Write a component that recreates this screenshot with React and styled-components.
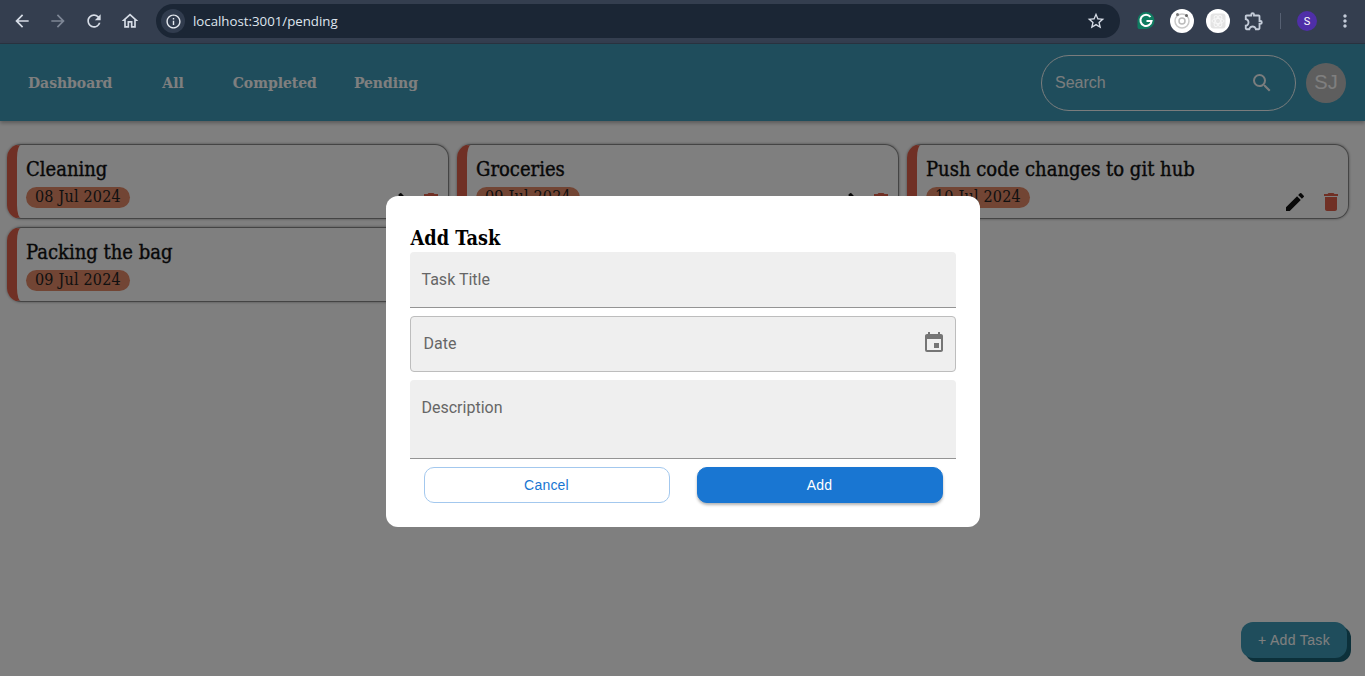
import React from 'react'
import styled, { createGlobalStyle } from 'styled-components'
import {
  MdArrowBack, MdArrowForward, MdRefresh, MdOutlineHome, MdInfoOutline, MdStarBorder,
  MdOutlineExtension, MdMoreVert, MdSearch, MdEdit, MdDelete, MdEvent,
} from 'react-icons/md'

const slab = '"DejaVu Serif Condensed", "DejaVu Serif", serif'
const arial = '"Liberation Sans", Arial, sans-serif'

const GlobalStyle = createGlobalStyle`
  html, body { margin: 0; padding: 0; height: 100%; overflow: hidden; background: #fff; }
  * { box-sizing: border-box; }
  #root { height: 100%; }
`

const Page = styled.div`
  position: relative;
  width: 1365px;
  height: 676px;
  overflow: hidden;
  font-family: Roboto, sans-serif;
`

const Toolbar = styled.div`
  height: 44px;
  background: #343e4f;
  border-bottom: 1px solid #2b3442;
  display: flex;
  align-items: center;
  padding: 0 0 1px 4px;
  color: #d6dce6;
`

const NavIcon = styled.span`
  width: 36px;
  height: 36px;
  display: flex;
  align-items: center;
  justify-content: center;
  font-size: 20px;
  color: ${p => (p.$off ? '#7d8695' : '#d6dce6')};
`

const UrlBar = styled.div`
  width: 964px;
  height: 34px;
  margin-left: 8px;
  padding: 0 6px 0 5px;
  border-radius: 17px;
  background: #1b2635;
  display: flex;
  align-items: center;
`

const InfoBubble = styled.span`
  width: 24px;
  height: 24px;
  border-radius: 50%;
  background: #313c4e;
  display: flex;
  align-items: center;
  justify-content: center;
  font-size: 17px;
  color: #e6eaf0;
`

const UrlText = styled.span`
  margin-left: 8px;
  flex: 1;
  font-family: "Open Sans", sans-serif;
  font-size: 13.25px;
  color: #dfe5ee;
`

const Extensions = styled.div`
  display: flex;
  align-items: center;
  margin-left: 8px;
`

const ExtSlot = styled.span`
  width: 36px;
  height: 36px;
  margin-left: ${p => p.$gap || 0}px;
  display: flex;
  align-items: center;
  justify-content: center;
  font-size: ${p => p.$size || 22}px;
  color: #c3cbd8;
`

const Divider = styled.span`
  width: 1px;
  height: 16px;
  background: #566072;
  margin: 0 16px 0 8px;
`

const Profile = styled.span`
  width: 20px;
  height: 20px;
  border-radius: 50%;
  background: #4f2fa8;
  color: #fff;
  font-size: 11px;
  display: flex;
  align-items: center;
  justify-content: center;
`

const Header = styled.header`
  height: 77px;
  background: #3e9bb8;
  box-shadow: 0 2px 4px rgba(0, 0, 0, 0.3);
  display: flex;
  align-items: center;
  padding: 0 19px 0 28px;
  color: #fff;
`

const NavLink = styled.a`
  font-family: ${slab};
  font-weight: 700;
  font-size: 15.5px;
  margin-left: ${p => p.$gap || 0}px;
`

const SearchBox = styled.div`
  margin-left: auto;
  width: 255px;
  height: 56px;
  border: 1px solid #fff;
  border-radius: 28px;
  padding: 0 21px 0 13px;
  display: flex;
  align-items: center;
  justify-content: space-between;
  font-family: ${arial};
  font-size: 16px;
  opacity: 0.95;
`

const Avatar = styled.div`
  margin-left: 10px;
  width: 40px;
  height: 40px;
  border-radius: 50%;
  background: #bdbdbd;
  display: flex;
  align-items: center;
  justify-content: center;
  font-family: ${arial};
  font-size: 20px;
`

const TaskGrid = styled.main`
  display: grid;
  grid-template-columns: repeat(3, 442px);
  gap: 8px;
  padding: 23px 0 0 7px;
`

const TaskCard = styled.article`
  height: 75px;
  border: 1px solid #888;
  border-left: 10px solid #e0604a;
  border-radius: 14px;
  box-shadow: 0 0 3px rgba(0, 0, 0, 0.4);
  padding: 11px 5px 0 9px;
  display: flex;
  justify-content: space-between;
`

const TaskText = styled.div`
  display: flex;
  flex-direction: column;
  align-items: flex-start;
`

const TaskTitle = styled.h3`
  margin: 0;
  font-family: ${slab};
  font-weight: 500;
  font-size: 20px;
  line-height: 27px;
  color: #111;
  -webkit-text-stroke: 0.4px #111;
`

const DateBadge = styled.span`
  margin-top: 4px;
  height: 21px;
  padding: 0 9px;
  border-radius: 11px;
  background: #e58a68;
  font-family: ${slab};
  font-size: 16px;
  letter-spacing: 0.2px;
  line-height: 19px;
  color: #222;
`

const Actions = styled.div`
  align-self: flex-end;
  display: flex;
  gap: 12px;
  font-size: 24px;
  margin-bottom: 4px;
`

const ActionIcon = styled.span`
  display: flex;
  color: ${p => (p.$danger ? '#e0604a' : '#111')};
`

const AddButton = styled.button`
  position: absolute;
  right: 18px;
  bottom: 18px;
  width: 106px;
  height: 36px;
  border: 0;
  border-radius: 12px;
  background: #3e9bb8;
  box-shadow: 4px 4px 0 #186074;
  color: #fff;
  font-family: ${arial};
  font-size: 14px;
  letter-spacing: 0.35px;
`

const Backdrop = styled.div`
  position: absolute;
  left: 0;
  right: 0;
  top: 44px;
  bottom: 0;
  background: rgba(0, 0, 0, 0.5);
  display: flex;
  align-items: center;
  justify-content: center;
  padding-top: 3px;
`

const Modal = styled.section`
  width: 594px;
  height: 331px;
  background: #fff;
  border-radius: 12px;
  padding: 29px 24px 0;
`

const ModalTitle = styled.h2`
  margin: 0;
  padding-left: 1px;
  font-family: ${slab};
  font-weight: 700;
  font-size: 19.7px;
  line-height: 27px;
  color: #000;
`

const Field = styled.div`
  height: ${p => p.$height || 56}px;
  margin-bottom: 8px;
  background: #efefef;
  border-radius: 4px 4px 0 0;
  border-bottom: 1px solid #949494;
  padding: 18px 12px 0;
  font-size: 16px;
  line-height: 20px;
  color: #666;
`

const OutlinedField = styled.div`
  height: 56px;
  margin-bottom: 8px;
  background: #efefef;
  border: 1px solid #bdbdbd;
  border-radius: 4px;
  padding: 0 9px 2px 13px;
  display: flex;
  align-items: center;
  justify-content: space-between;
  font-size: 16px;
  color: #666;

  svg {
    font-size: 24px;
    color: #757575;
  }
`

const ButtonRow = styled.div`
  display: flex;
  gap: 27px;
  padding: 0 13px 0 14px;
`

const DialogButton = styled.button`
  flex: 1;
  height: 36px;
  border-radius: 10px;
  font-family: ${arial};
  font-size: 14px;
  letter-spacing: 0.2px;
  border: 1px solid ${p => (p.$primary ? '#1976d2' : '#a3c8ee')};
  background: ${p => (p.$primary ? '#1976d2' : '#fff')};
  color: ${p => (p.$primary ? '#fff' : '#1976d2')};
  box-shadow: ${p => (p.$primary ? '0 2px 3px rgba(0,0,0,0.3)' : 'none')};
`

const tasks = [
  { title: 'Cleaning', date: '08 Jul 2024' },
  { title: 'Groceries', date: '09 Jul 2024' },
  { title: 'Push code changes to git hub', date: '10 Jul 2024' },
  { title: 'Packing the bag', date: '09 Jul 2024' },
]

function GrammarlyIcon() {
  return (
    <svg width="20" height="20" viewBox="0 0 20 20">
      <path d="M10 1a8.5 8.5 0 1 1 0 17H2.5l-1-1.5V9.5A8.5 8.5 0 0 1 10 1z" fill="#0f7c61" />
      <path d="M14.5 6A5.6 5.6 0 1 0 15.6 10H10.5" fill="none" stroke="#fff" strokeWidth="2" />
    </svg>
  )
}

function TimerIcon() {
  return (
    <svg width="24" height="24" viewBox="0 0 24 24">
      <circle cx="12" cy="12" r="12" fill="#fff" />
      <circle cx="12" cy="12" r="7" fill="none" stroke="#c9c9c9" strokeWidth="1.5" />
      <circle cx="12" cy="12" r="3" fill="none" stroke="#bbb" strokeWidth="1.5" />
      <circle cx="7.5" cy="5.5" r="1.5" fill="#777" />
      <circle cx="16.5" cy="6.5" r="1.5" fill="#666" />
    </svg>
  )
}

function ReactIcon() {
  return (
    <svg width="24" height="24" viewBox="0 0 24 24">
      <circle cx="12" cy="12" r="12" fill="#fff" />
      <rect x="4.5" y="4.5" width="15" height="15" rx="3" fill="#e4e4e4" />
      <g fill="none" stroke="#f7f7f7" strokeWidth="1">
        <ellipse cx="12" cy="12" rx="6" ry="2.5" />
        <ellipse cx="12" cy="12" rx="6" ry="2.5" transform="rotate(60 12 12)" />
        <ellipse cx="12" cy="12" rx="6" ry="2.5" transform="rotate(120 12 12)" />
      </g>
    </svg>
  )
}

export default function App() {
  return (
    <Page>
      <GlobalStyle />
      <Toolbar>
        <NavIcon><MdArrowBack /></NavIcon>
        <NavIcon $off><MdArrowForward /></NavIcon>
        <NavIcon><MdRefresh /></NavIcon>
        <NavIcon><MdOutlineHome /></NavIcon>
        <UrlBar>
          <InfoBubble><MdInfoOutline /></InfoBubble>
          <UrlText>localhost:3001/pending</UrlText>
          <NavIcon><MdStarBorder /></NavIcon>
        </UrlBar>
        <Extensions>
          <ExtSlot><GrammarlyIcon /></ExtSlot>
          <ExtSlot><TimerIcon /></ExtSlot>
          <ExtSlot><ReactIcon /></ExtSlot>
          <ExtSlot><MdOutlineExtension /></ExtSlot>
          <Divider />
          <Profile>S</Profile>
          <ExtSlot $gap={10} $size={20}><MdMoreVert /></ExtSlot>
        </Extensions>
      </Toolbar>

      <Header>
        <NavLink>Dashboard</NavLink>
        <NavLink $gap={50}>All</NavLink>
        <NavLink $gap={49}>Completed</NavLink>
        <NavLink $gap={37}>Pending</NavLink>
        <SearchBox>
          <span>Search</span>
          <MdSearch size={24} />
        </SearchBox>
        <Avatar>SJ</Avatar>
      </Header>

      <TaskGrid>
        {tasks.map(task => (
          <TaskCard key={task.title}>
            <TaskText>
              <TaskTitle>{task.title}</TaskTitle>
              <DateBadge>{task.date}</DateBadge>
            </TaskText>
            <Actions>
              <ActionIcon><MdEdit /></ActionIcon>
              <ActionIcon $danger><MdDelete /></ActionIcon>
            </Actions>
          </TaskCard>
        ))}
      </TaskGrid>

      <AddButton>+ Add Task</AddButton>

      <Backdrop>
        <Modal>
          <ModalTitle>Add Task</ModalTitle>
          <Field>Task Title</Field>
          <OutlinedField>
            <span>Date</span>
            <MdEvent />
          </OutlinedField>
          <Field $height={79}>Description</Field>
          <ButtonRow>
            <DialogButton>Cancel</DialogButton>
            <DialogButton $primary>Add</DialogButton>
          </ButtonRow>
        </Modal>
      </Backdrop>
    </Page>
  )
}
